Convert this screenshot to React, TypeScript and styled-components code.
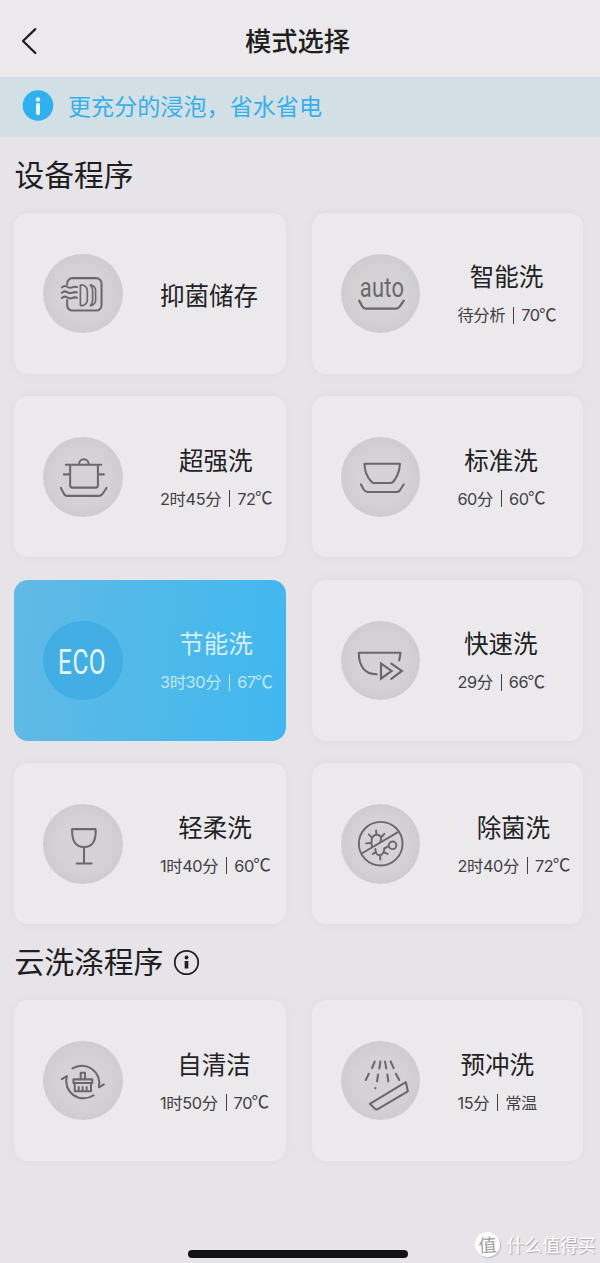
import React from "react";
import styled, { createGlobalStyle } from "styled-components";

const GlobalStyle = createGlobalStyle`
  *, *::before, *::after { box-sizing: border-box; }
  body {
    margin: 0;
    background: #e6e4e8;
    font-family: "Inter", "Noto Sans CJK SC", sans-serif;
    color: #1f1e21;
  }
`;

const Screen = styled.div`
  position: relative;
  display: flex;
  flex-direction: column;
  width: 600px;
  height: 1263px;
  background: #e6e4e8;
  overflow: hidden;
`;

const Header = styled.header`
  display: grid;
  grid-template-columns: 60px 1fr 60px;
  align-items: center;
  height: 77px;
  padding-top: 5px;
  background: #ebe9ec;
`;

const BackButton = styled.button`
  display: flex;
  width: 60px;
  padding: 0 0 0 20px;
  border: 0;
  background: none;
  color: #1f1e21;
`;

const PageTitle = styled.h1`
  margin: 0;
  padding: 0 5px 2px 0;
  text-align: center;
  font: 500 26.3px/38px "Noto Sans CJK SC", sans-serif;
`;

const Banner = styled.div`
  display: flex;
  align-items: center;
  gap: 14px;
  height: 60px;
  padding: 0 0 3px 22px;
  background: #d2dfe5;
  color: #35b0ec;
  font: 400 23.1px/34px "Noto Sans CJK SC", sans-serif;
`;

const BannerText = styled.span`
  padding-bottom: 2px;
`;

const SectionTitle = styled.h2`
  display: flex;
  align-items: center;
  gap: 10px;
  height: 76px;
  margin: 0;
  padding-left: 14.4px;
  font: 400 29.8px/44px "Noto Sans CJK SC", sans-serif;
`;

const SectionText = styled.span`
  padding-bottom: 4px;
`;

const Grid = styled.div`
  display: grid;
  grid-template-columns: repeat(2, 271.4px);
  grid-auto-rows: 160.8px;
  column-gap: 26px;
  row-gap: 22.7px;
  padding-left: 14.3px;
`;

const Card = styled.div<{ $active?: boolean }>`
  display: flex;
  align-items: center;
  gap: 37.3px;
  padding-left: 29px;
  border-radius: 14px;
  background: ${(p) =>
    p.$active ? "linear-gradient(95deg, #62b9e5 0%, #4fb9ea 50%, #41b7ef 100%)" : "#ebe9ec"};
  box-shadow: ${(p) => (p.$active ? "none" : "0 0 10px rgba(90, 85, 100, 0.06)")};
  color: ${(p) => (p.$active ? "#d5effa" : "#232225")};
`;

const IconDisc = styled.div<{ $active?: boolean }>`
  flex: none;
  width: 79.4px;
  height: 79.4px;
  border-radius: 50%;
  background: ${(p) =>
    p.$active
      ? "radial-gradient(circle, #43aee3 40%, #40ade3 70%)"
      : "radial-gradient(circle, #d4d2d5 45%, #cecccf 70%)"};
  color: ${(p) => (p.$active ? "#e2f5fc" : "#6a686b")};
`;

const Label = styled.div<{ $single: boolean }>`
  display: flex;
  flex-direction: column;
  align-items: center;
  gap: 7px;
  padding-top: ${(p) => (p.$single ? 4 : 1)}px;
  white-space: nowrap;
`;

const Name = styled.div`
  font: 400 24.5px/36px "Noto Sans CJK SC", sans-serif;
`;

const Detail = styled.div<{ $active?: boolean }>`
  display: flex;
  align-items: center;
  height: 28px;
  font-size: 16.3px;
  line-height: 28px;
  letter-spacing: -0.35px;
  color: ${(p) => (p.$active ? "#c2e7f7" : "#414043")};
`;

const Unit = styled.span`
  margin-left: -0.6px;
  padding-bottom: 3px;
  font-family: "Noto Sans CJK SC", sans-serif;
  font-size: 17.6px;
  letter-spacing: -1px;
`;

const Divider = styled.span`
  width: 1px;
  height: 17px;
  margin: 0 7px 0 8px;
  background: currentColor;
`;

const Footer = styled.footer`
  display: flex;
  margin-top: auto;
  padding: 0 0 5.5px 187.5px;
`;

const HomeBar = styled.div`
  width: 220.5px;
  height: 8px;
  border-radius: 4px;
  background: #121114;
`;

const Watermark = styled.div`
  position: absolute;
  right: 4.500px;
  bottom: 5px;
  display: flex;
  align-items: center;
  gap: 7px;
  color: #fff;
  font: 400 17.8px/26px "Noto Sans CJK SC", sans-serif;
  text-shadow: 1px 1px 1px #a5a3a7;
`;

const WatermarkText = styled.span`
  padding-bottom: 1px;
`;

const WatermarkSeal = styled.span`
  display: flex;
  align-items: center;
  justify-content: center;
  width: 25px;
  height: 25px;
  padding-bottom: 2px;
  border-radius: 50%;
  background: #fff;
  box-shadow: 1px 1px 1px #bdbbbf;
  color: #a09ea2;
  font-size: 18px;
  text-shadow: none;
  transform: rotate(-4deg);
`;

const GlyphSvg = styled.svg`
  display: block;
  width: 100%;
  height: 100%;
  overflow: visible;
`;

const Glyph = ({ children, width = 6.2 }: { children: React.ReactNode; width?: number }) => (
  <GlyphSvg
    viewBox="0 0 240 240"
    fill="none"
    stroke="currentColor"
    strokeWidth={width}
    strokeLinecap="round"
    strokeLinejoin="round"
  >
    {children}
  </GlyphSvg>
);

const GlyphText = styled.text`
  font-family: "Roboto", sans-serif;
  fill: currentColor;
  stroke: none;
  text-anchor: middle;
`;

const StorageIcon = () => (
  <Glyph>
    <path d="M73 92V89a16 16 0 0 1 16-16h72a16 16 0 0 1 16 16v66a16 16 0 0 1-16 16H89a16 16 0 0 1-16-16v-15" />
    <path d="M57 101q8-7 16-2t15 2t15-1M57 117q8-7 16-2t15 2t15-1M57 133q8-7 16-2t15 2t15-1" />
    <path d="M113 94h7q14 5 14 17v28q0 12-14 17h-7zM143 94h3q13 5 13 17v28q0 12-13 17h-3q7-6 7-17v-28q0-11-7-17" strokeWidth="5" />
  </Glyph>
);

const AutoIcon = () => (
  <Glyph>
    <GlyphText transform="translate(124 129) scale(0.79 1)" fontSize="84" fontWeight="400" letterSpacing="1">
      auto
    </GlyphText>
    <path d="M55 141l9 17q4 7 11 7h92q7 0 11-7l12-17" strokeWidth="6.8" />
  </Glyph>
);

const PotIcon = () => (
  <Glyph>
    <path d="M69 84h107M109 82a14.500 14.500 0 0 1 29 0M82 86v60q0 7 7 7h70q7 0 7-7V86M63 113h17M168 113h16" />
    <path d="M54 154l9 17q3 7 10 7h97q7 0 11-7l11-17" />
  </Glyph>
);

const BowlIcon = () => (
  <Glyph>
    <path d="M71 81h107c0 25-13 47-21 55q-3 3-7 3H99q-3 0-6-3C81 124 71 103 71 81z" />
    <path d="M60 143l8 15q5 8 12 8h89q7 0 11-8l10-15" />
  </Glyph>
);

const EcoIcon = () => (
  <Glyph>
    <GlyphText transform="translate(118 160) scale(0.69 1)" fontSize="107" fontWeight="400" letterSpacing="2">
      ECO
    </GlyphText>
  </Glyph>
);

const QuickIcon = () => (
  <Glyph width={6.6}>
    <path d="M176 119l4-23H54c0 42 20 65 54 65" />
    <path d="M121 129v45l32-23zM152 129l32 22-32 24" strokeLinejoin="miter" />
  </Glyph>
);

const GlassIcon = () => (
  <Glyph>
    <path d="M88 76h71c2 33-8 54-35 54s-37-21-36-54zM124 130v50M102 180h45" />
  </Glyph>
);

const GermIcon = () => (
  <Glyph width={5.8}>
    <circle cx="120" cy="120" r="66" />
    <path d="M65 148L171 86" />
    <circle cx="156" cy="125" r="11.500" />
    <path d="M94 130c-4-13-3-35 12-37s18 11 13 21" />
    <path d="M106 80l1 12M84 92l9 9M76 119l15-1M131 90l-8 9" />
    <path d="M104 136c0 12 6 19 13 19s14-10 14-21" />
    <path d="M96 151l9-5M119 168l-1-12M141 151l-11-5M132 134l10-6" />
  </Glyph>
);

const CleanIcon = () => (
  <Glyph>
    <path d="M89 83A53 53 0 0 1 169 140l15-9M153 164A53 53 0 0 1 72 106l-15 9" />
    <path d="M114 115V96h13v19M92 116h57v11H92zM96 128v24h49v-24M108 139v12M120 139v12M132 139v12" />
  </Glyph>
);

const ShowerIcon = () => (
  <Glyph>
    <path d="M102 62l-8 20M119 62l-3 21M133 62l4 21M150 62l9 20M84 99l-9 19M112 101l-3 21M140 101l3 21M166 99l10 19" />
    <path d="M104 142v1" strokeWidth="6.500" />
    <path d="M87 190l109-66 6 28-91 54q-4 2-8-1z" />
  </Glyph>
);

type Program = {
  name: string;
  icon: React.ComponentType;
  duration?: string;
  temperature?: string;
  active?: boolean;
};

const devicePrograms: Program[] = [
  { name: "抑菌储存", icon: StorageIcon },
  { name: "智能洗", icon: AutoIcon, duration: "待分析", temperature: "70℃" },
  { name: "超强洗", icon: PotIcon, duration: "2时45分", temperature: "72℃" },
  { name: "标准洗", icon: BowlIcon, duration: "60分", temperature: "60℃" },
  { name: "节能洗", icon: EcoIcon, duration: "3时30分", temperature: "67℃", active: true },
  { name: "快速洗", icon: QuickIcon, duration: "29分", temperature: "66℃" },
  { name: "轻柔洗", icon: GlassIcon, duration: "1时40分", temperature: "60℃" },
  { name: "除菌洗", icon: GermIcon, duration: "2时40分", temperature: "72℃" },
];

const cloudPrograms: Program[] = [
  { name: "自清洁", icon: CleanIcon, duration: "1时50分", temperature: "70℃" },
  { name: "预冲洗", icon: ShowerIcon, duration: "15分", temperature: "常温" },
];

const ProgramCard = ({ program }: { program: Program }) => {
  const { name, icon: Icon, duration, temperature, active } = program;
  return (
    <Card $active={active}>
      <IconDisc $active={active}>
        <Icon />
      </IconDisc>
      <Label $single={!duration}>
        <Name>{name}</Name>
        {duration && temperature && (
          <Detail $active={active}>
            {duration}
            <Divider />
            {temperature.replace("℃", "")}
            {temperature.endsWith("℃") && <Unit>℃</Unit>}
          </Detail>
        )}
      </Label>
    </Card>
  );
};

export default function App() {
  return (
    <Screen>
      <GlobalStyle />
      <Header>
        <BackButton aria-label="返回">
          <svg width="18" height="28" viewBox="0 0 18 28" fill="none" stroke="currentColor" strokeWidth="2.3" strokeLinecap="round" strokeLinejoin="round">
            <path d="M15.300 2.200L3 14l12.300 12" />
          </svg>
        </BackButton>
        <PageTitle>模式选择</PageTitle>
      </Header>
      <Banner>
        <svg width="32" height="32" viewBox="0 0 32 32">
          <circle cx="16" cy="15.500" r="15.300" fill="#2fb1f0" />
          <circle cx="16" cy="9.500" r="2.200" fill="#e4f4fb" />
          <path d="M16 14.800v8.500" stroke="#e4f4fb" strokeWidth="4" strokeLinecap="round" />
        </svg>
        <BannerText>更充分的浸泡，省水省电</BannerText>
      </Banner>
      <SectionTitle>
        <SectionText>设备程序</SectionText>
      </SectionTitle>
      <Grid>
        {devicePrograms.map((p) => (
          <ProgramCard key={p.name} program={p} />
        ))}
      </Grid>
      <SectionTitle>
        <SectionText>云洗涤程序</SectionText>
        <svg width="27" height="27" viewBox="0 0 27 27" fill="none" stroke="#1f1e21">
          <circle cx="13.500" cy="13.500" r="11.700" strokeWidth="1.800" />
          <circle cx="13.500" cy="8.500" r="1.900" fill="#1f1e21" stroke="none" />
          <path d="M13.500 12v7.500" strokeWidth="3.700" />
        </svg>
      </SectionTitle>
      <Grid>
        {cloudPrograms.map((p) => (
          <ProgramCard key={p.name} program={p} />
        ))}
      </Grid>
      <Footer>
        <HomeBar />
      </Footer>
      <Watermark>
        <WatermarkSeal>值</WatermarkSeal>
        <WatermarkText>什么值得买</WatermarkText>
      </Watermark>
    </Screen>
  );
}
